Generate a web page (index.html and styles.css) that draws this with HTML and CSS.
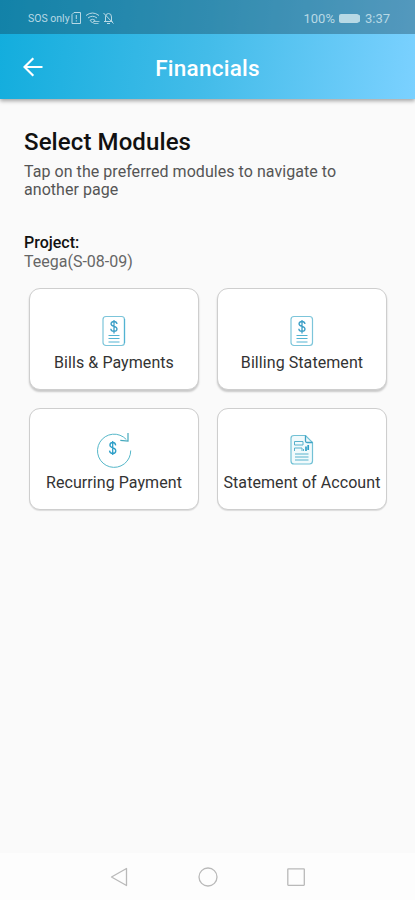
FILE: index.html
```html
<!DOCTYPE html>
<html lang="en">
<head>
<meta charset="utf-8">
<title>Financials</title>
<link rel="stylesheet" href="styles.css">
</head>
<body>
<header class="top">
  <div class="status">
    <span class="carrier">SOS only</span>
    <svg class="status-icons" width="44" height="14" viewBox="0 0 44 14" fill="none" stroke="currentColor">
      <path d="M3 1.5h6.5v11H1V3.5zM5.3 4v4M5.3 9.3v1.2"/>
      <path d="M15 4.5q6.500-5 13 0M17 7q4.500-3.500 9 0M19 9.300q2.500-2 5 0L21.500 12z"/>
      <path d="M22.500 10.500h6M22.500 12.500h5" stroke-width=".8"/>
      <path d="M33 10.500h8.500M34.500 10V6q0-3.500 3-3.500T40.500 6v4M36 12.500h3M32.500 2l10 10.500"/>
    </svg>
    <span class="percent">100%</span>
    <span class="battery"></span>
    <span class="clock">3:37</span>
  </div>
  <div class="bar">
    <svg class="back" width="20" height="20" viewBox="0 0 20 20" fill="none" stroke="currentColor" stroke-width="2.200"><path d="M19.500 10H2M10.300 1.200L1.500 10l8.800 8.800"/></svg>
    <h1>Financials</h1>
  </div>
</header>
<main>
  <h2>Select Modules</h2>
  <p class="intro">Tap on the preferred modules to navigate to another page</p>
  <p class="project"><b>Project:</b><span>Teega(S-08-09)</span></p>
  <div class="grid">
    <a class="card">
      <svg width="36" height="36" viewBox="0 0 36 36" fill="none" stroke="#52b3d2">
        <rect x="7" y="3.500" width="21.500" height="29" rx="3" stroke="#7cc5da" stroke-width="1.200"/>
        <path d="M28.500 6v24" stroke-width="1.200"/>
        <path d="M21 11q-.4-2.500-3-2.500t-3 2.300q0 1.800 3 2.500t3 2.600q0 2.400-3 2.400t-3.200-2.600M18 7v13.500" stroke="#3d9fc7" stroke-width="1.300"/>
        <path d="M12.500 22.500h11M12.500 25.500h11M12.500 29h11"/>
      </svg>
      <span>Bills &amp; Payments</span>
    </a>
    <a class="card">
      <svg width="36" height="36" viewBox="0 0 36 36" fill="none" stroke="#52b3d2">
        <rect x="7" y="3.500" width="21.500" height="29" rx="3" stroke="#7cc5da" stroke-width="1.200"/>
        <path d="M21 11q-.4-2.500-3-2.500t-3 2.300q0 1.800 3 2.500t3 2.600q0 2.400-3 2.400t-3.200-2.600M18 7v13.500" stroke="#3d9fc7" stroke-width="1.300"/>
        <path d="M12.500 22.500h11M12.500 25.500h11M12.500 29h11"/>
      </svg>
      <span>Billing Statement</span>
    </a>
    <a class="card flat">
      <svg width="36" height="36" viewBox="0 0 36 36" fill="none" stroke="#55b7c9">
        <path d="M30.300 6.500A16.600 16.600 0 1 0 34.700 17.500"/>
        <path d="M32 0v8l-7.700-.6" stroke="#45a9bd" stroke-width="1.200"/>
        <path d="M19.700 12.300q-.4-2.800-3-2.800t-2.800 2.600q0 2 2.900 2.800t3 2.900q0 2.700-3 2.700t-3.300-2.900M16.700 8v14" stroke="#2e9fc8" stroke-width="1.300"/>
      </svg>
      <span>Recurring Payment</span>
    </a>
    <a class="card flat">
      <svg width="36" height="36" viewBox="0 0 36 36" fill="none" stroke="#58b2cc">
        <path d="M10 2.500h11.500l7 7V28q0 3-3 3H10q-3 0-3-3V5.300q0-2.800 3-2.800z" fill="#f1fafc" stroke="#72c1d5" stroke-width="1.200"/>
        <path d="M21.500 2.500V8q0 1.500 1.500 1.500h5.500" stroke="#3fa3c5" stroke-width="1.300"/>
        <path d="M10.500 8.500H19v3.500h-8.500zM10.500 18v-3H18v3M19.500 18v-2M11 21h13.500M11 24h13.500M11 27h13.500"/>
        <path d="M22 13.500v4.500M24.200 12v5" stroke="#2f9fc7" stroke-width="1.700"/>
      </svg>
      <span>Statement of Account</span>
    </a>
  </div>
</main>
<nav class="keys">
  <svg width="200" height="24" viewBox="0 0 200 24" fill="none" stroke="#b9b9b9" stroke-width="1.300" stroke-linejoin="round">
    <path d="M18.500 3.500v17L3.500 12z"/><circle cx="100" cy="12" r="9"/><rect x="179.800" y="3.800" width="16.500" height="16.500" rx=".5"/>
  </svg>
</nav>
</body>
</html>
```
FILE: styles.css
```css
* { box-sizing: border-box; }
body {
  margin: 0;
  height: 900px;
  display: flex;
  flex-direction: column;
  overflow: hidden;
  background: #fafafa;
  color: #333;
  font-family: Roboto, sans-serif;
}
h1, h2, p { margin: 0; }
.top {
  height: 99px;
  background: linear-gradient(97deg, #12addd, #43bce9 50%, #7bd1ff);
  box-shadow: 0 2px 4px rgba(0, 0, 0, .35);
  color: #fff;
}
.status {
  height: 34px;
  padding: 2px 25px 0 28px;
  display: flex;
  align-items: center;
  background: rgba(20, 55, 75, .36);
  color: #b8d9e5;
  font-size: 14px;
}
.carrier { font-size: 10.5px; width: 43px; white-space: nowrap; }
.status-icons { margin-right: auto; }
.percent { font-size: 13px; }
.clock { font-size: 13px; }
.battery {
  width: 20px;
  height: 9px;
  margin: 0 6px 0 4px;
  border-radius: 2px;
  background: #b8d9e5;
  box-shadow: 2px 0 0 -1px #b8d9e5;
}
.bar {
  height: 65px;
  padding: 0 23px;
  display: grid;
  grid-template-columns: 20px 1fr 20px;
  align-items: center;
}
h1 {
  padding-top: 2px;
  text-align: center;
  font-size: 22.5px;
  font-weight: 500;
  letter-spacing: .25px;
}
main { flex: 1; padding: 28px 24px 0; }
h2 {
  font-size: 24px;
  line-height: 30px;
  font-weight: 500;
  letter-spacing: .1px;
  color: #111;
}
.intro { margin-top: 6px; font-size: 16px; line-height: 18px; letter-spacing: .05px; color: #555; }
.project {
  margin-top: 35px;
  display: grid;
  font-size: 16px;
  line-height: 18.500px;
  color: #666;
}
.project b { font-weight: 500; color: #111; }
.grid {
  margin: 17px 4px 0 5px;
  display: grid;
  grid-template-columns: 170px 170px;
  grid-auto-rows: 102px;
  gap: 18px;
}
.card {
  display: flex;
  flex-direction: column;
  align-items: center;
  padding-top: 24px;
  border: 1px solid #cecece;
  border-radius: 11px;
  background: #fff;
  box-shadow: 0 2px 2px rgba(0, 0, 0, .2);
}
.flat { box-shadow: 0 1px 1px rgba(0, 0, 0, .12); }
.card svg { overflow: visible; }
.card span { margin-top: 4px; font-size: 16px; line-height: 20px; white-space: nowrap; letter-spacing: .07px; }
.keys {
  height: 47px;
  display: flex;
  justify-content: center;
  align-items: center;
  background: #fdfdfd;
}
```
